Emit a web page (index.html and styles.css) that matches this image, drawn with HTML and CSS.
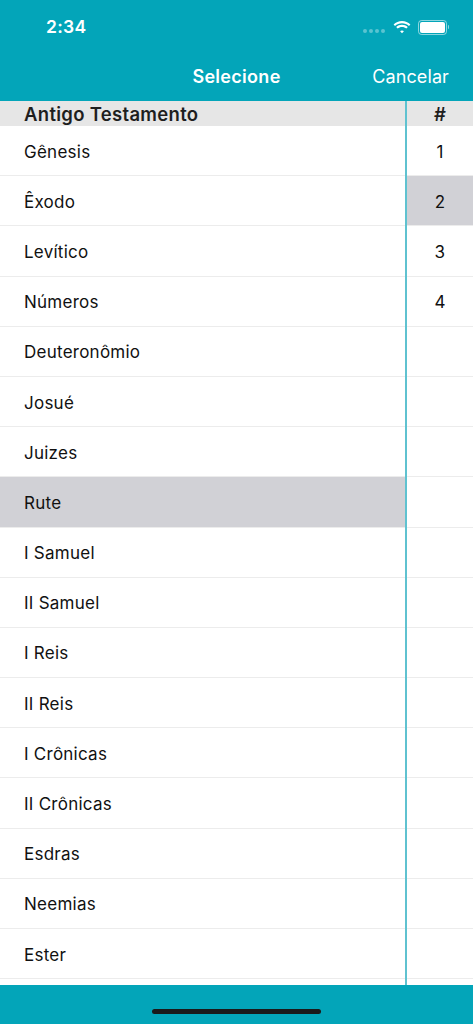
FILE: index.html
```html
<!DOCTYPE html>
<html>
<head>
  <title>Selecione</title>
  <link rel="stylesheet" href="styles.css">
</head>
<body>
  <div class="screen">
    <div class="topbar">
      <div class="status">
        <span class="time">2:34</span>
        <div class="status-icons">
          <span class="dots"><i></i><i></i><i></i><i></i></span>
          <svg class="wifi" width="18" height="13" viewBox="0 0 18 13">
            <path d="M9 2.2c2.7 0 5.1 1 7 2.7l1.4-1.5C15.2 1.4 12.2 0.1 9 0.1S2.8 1.4 0.6 3.4L2 4.9C3.9 3.2 6.3 2.2 9 2.2z" fill="#fff"/>
            <path d="M9 5.9c1.7 0 3.2 0.6 4.4 1.6l1.4-1.5C13.2 4.6 11.2 3.8 9 3.8S4.8 4.6 3.2 6l1.4 1.5C5.8 6.5 7.3 5.9 9 5.9z" fill="#fff"/>
            <path d="M9 9.5c0.8 0 1.4 0.3 1.9 0.7L9 12.3 7.1 10.2C7.6 9.8 8.2 9.5 9 9.5z" fill="#fff"/>
          </svg>
          <span class="battery"><span class="level"></span></span>
          <span class="cap"></span>
        </div>
      </div>
      <div class="navbar">
        <span class="title">Selecione</span>
        <span class="cancel">Cancelar</span>
      </div>
    </div>

    <div class="content">
      <div class="books">
        <div class="section">Antigo Testamento</div>
        <div class="row">Gênesis</div>
        <div class="row">Êxodo</div>
        <div class="row">Levítico</div>
        <div class="row">Números</div>
        <div class="row">Deuteronômio</div>
        <div class="row">Josué</div>
        <div class="row">Juizes</div>
        <div class="row selected">Rute</div>
        <div class="row">I Samuel</div>
        <div class="row">II Samuel</div>
        <div class="row">I Reis</div>
        <div class="row">II Reis</div>
        <div class="row">I Crônicas</div>
        <div class="row">II Crônicas</div>
        <div class="row">Esdras</div>
        <div class="row">Neemias</div>
        <div class="row">Ester</div>
        <div class="row"></div>
      </div>
      <div class="chapters">
        <div class="section">#</div>
        <div class="row">1</div>
        <div class="row selected">2</div>
        <div class="row">3</div>
        <div class="row">4</div>
        <div class="row"></div>
        <div class="row"></div>
        <div class="row"></div>
        <div class="row"></div>
        <div class="row"></div>
        <div class="row"></div>
        <div class="row"></div>
        <div class="row"></div>
        <div class="row"></div>
        <div class="row"></div>
        <div class="row"></div>
        <div class="row"></div>
        <div class="row"></div>
        <div class="row"></div>
      </div>
    </div>

    <div class="bottombar">
      <span class="home"></span>
    </div>
  </div>
</body>
</html>
```

FILE: styles.css
```css
body {
  margin: 0;
  padding: 0;
  font-family: Inter, "Noto Sans", sans-serif;
  background: #fff;
}
.screen {
  width: 473px;
  height: 1024px;
  display: flex;
  flex-direction: column;
  overflow: hidden;
}
.topbar {
  background: #03a5b9;
  color: #fff;
  height: 101px;
  flex-shrink: 0;
}
.status {
  height: 52px;
  display: flex;
  align-items: center;
  justify-content: space-between;
  padding: 0 24px 0 46px;
}
.time {
  font-size: 17.5px;
  font-weight: 600;
  letter-spacing: 0.3px;
  margin-top: 1px;
}
.status-icons {
  display: flex;
  align-items: center;
  margin-top: 2px;
}
.dots {
  display: flex;
  gap: 2px;
  margin-right: 8px;
  margin-top: 7px;
}
.dots i {
  width: 4px;
  height: 4px;
  border-radius: 50%;
  background: rgba(255, 255, 255, 0.35);
}
.wifi {
  margin-right: 7px;
}
.battery {
  width: 25px;
  height: 11px;
  border: 1px solid rgba(255, 255, 255, 0.55);
  border-radius: 3.5px;
  padding: 1px;
  display: flex;
}
.level {
  flex: 1;
  background: #fff;
  border-radius: 2px;
}
.cap {
  width: 1.5px;
  height: 4px;
  margin-left: 1px;
  background: rgba(255, 255, 255, 0.55);
  border-radius: 0 1px 1px 0;
}
.navbar {
  height: 49px;
  display: flex;
  align-items: center;
  justify-content: center;
  position: relative;
}
.title {
  font-size: 18px;
  font-weight: 600;
  letter-spacing: 0.3px;
  margin-bottom: 1px;
}
.cancel {
  position: absolute;
  right: 24px;
  font-size: 18px;
  letter-spacing: 0.1px;
  margin-bottom: 1px;
}
.content {
  flex: 1;
  display: flex;
  overflow: hidden;
}
.books {
  flex: 1;
  border-right: 2px solid #5fc2d0;
}
.chapters {
  width: 66px;
}
.section {
  height: 25px;
  background: #e6e6e6;
  color: #1e1e1e;
  font-size: 18.5px;
  font-weight: 600;
  letter-spacing: 0.3px;
  line-height: 27px;
  padding-left: 24px;
}
.chapters .section {
  padding-left: 0;
  text-align: center;
}
.row {
  height: 50.2px;
  box-sizing: border-box;
  border-bottom: 1px solid #ececec;
  display: flex;
  align-items: center;
  padding: 2px 0 0 24px;
  font-size: 17px;
  letter-spacing: 0.25px;
  color: #111;
}
.chapters .row {
  padding-left: 0;
  justify-content: center;
}
.row.selected {
  background: #d1d1d6;
}
.bottombar {
  background: #03a5b9;
  height: 39px;
  flex-shrink: 0;
  display: flex;
  justify-content: center;
}
.home {
  width: 169px;
  height: 5px;
  border-radius: 3px;
  background: #1a1a1a;
  margin-top: 24px;
}
```
